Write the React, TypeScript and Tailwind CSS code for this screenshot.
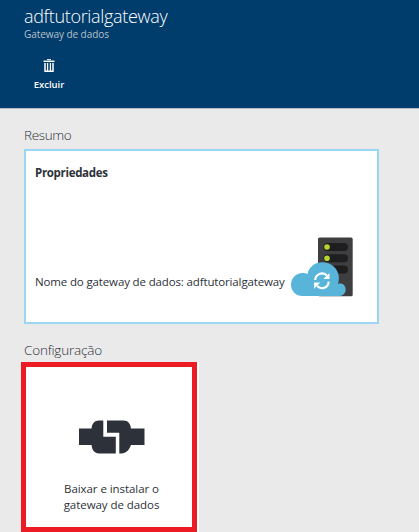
function TrashIcon() {
  return (
    <svg width="12" height="14" viewBox="0 0 12 14" className="block" fill="none" stroke="#fff">
      <path d="M4 .7h4" strokeWidth="1" />
      <path d="M.5 2.3h11" strokeWidth="1.5" />
      <path d="M2 4v8.3h8V4" strokeWidth="1.5" />
      <path d="M4.5 4v8M7.5 4v8" strokeWidth="1.1" />
      <path d="M6 4v8" strokeWidth=".7" opacity=".5" />
    </svg>
  );
}

function ServerCloudIcon() {
  return (
    <svg width="62" height="60" viewBox="0 0 62 60" className="block">
      <rect x="27" y=".5" width="34.7" height="58.8" rx="1.6" fill="#3e3e40" />
      <g fill="#1e1e1f">
        <rect x="32.5" y="6" width="24.5" height="8" rx="4" />
        <rect x="32.5" y="17.2" width="24.5" height="8" rx="4" />
        <rect x="32.5" y="28.4" width="24.5" height="8" rx="4" />
      </g>
      <circle cx="36" cy="10" r="2.8" fill="#b8d432" />
      <circle cx="36" cy="21.2" r="2.8" fill="#b8d432" />
      <path
        d="M11.5 59C5 59 0 54 0 47.700S5 36 11.5 36c2 0 3.500.4 5 1C17.800 30 24 25.300 31.500 25.300c9.500 0 16.400 7.300 16.400 15.700 0 2.200-.4 4.200-1 6 .8-.4 1.600-.5 2.400-.5 3.200 0 5.400 2.700 5.400 6.100S52.200 59 48.500 59z"
        fill="#59b4d9"
      />
      <g fill="none" stroke="#fff" strokeWidth="2.1">
        <path d="M24.200 43a6.700 6.700 0 0 1 11.500-4.500" />
        <path d="M37.700 44.600a6.700 6.700 0 0 1-11.500 4.500" />
      </g>
      <path d="M38.500 35.900v6.200h-6.200zM23.100 51.800v-6.200h6.200z" fill="#fff" />
    </svg>
  );
}

function ConnectorIcon() {
  return (
    <svg width="66" height="34" viewBox="0 0 66 34" className="block" fill="#2d323a">
      <path d="M0 8.500h12.600C12.800 4 15.500.5 20 .5h4.300v16.300h12.500v16.600H20c-4.500 0-7.200-3.500-7.400-8.300H0z" />
      <path d="M28 .5h16.500c4.500 0 7.200 3.500 7.400 8H65.500v16.600H51.900c-1.300 4.800-5 8.300-9.400 8.300h-2.200V12.800H28z" />
    </svg>
  );
}

export default function App() {
  return (
    <main className="h-[532px] w-[419px] overflow-hidden bg-[#eaeaea] font-['Open_Sans','Noto_Sans',sans-serif] text-[#2d3239]">
      <header className="h-[109px] border-b border-[#b5bbc1] bg-[#003c6c] pl-6 text-white">
        <h1 className="pt-1 text-[18px] leading-6 font-light tracking-[-0.32px]">adftutorialgateway</h1>
        <p className="text-[10px] leading-[13px] tracking-[-0.06px] text-[#b8c0c8]">Gateway de dados</p>
        <button className="mt-[18px] flex w-[50px] flex-col items-center">
          <TrashIcon />
          <span className="mt-[5px] text-[9.5px] leading-[14px] font-semibold">Excluir</span>
        </button>
      </header>
      <section className="pl-6">
        <h2 className="mt-4 h-6 text-[13.5px] leading-5 font-light tracking-[-0.35px]">Resumo</h2>
        <div className="flex h-[175px] w-[355px] flex-col border-2 border-[#9bd6f3] bg-white pl-[9px]">
          <h3 className="mt-[14px] text-[11.5px] leading-4 font-bold tracking-[-0.32px]">Propriedades</h3>
          <div className="mt-14 flex items-start">
            <p className="mt-[37px] w-[256px] shrink-0 text-[11.5px] leading-4 tracking-[-0.14px] whitespace-nowrap">
              Nome do gateway de dados: adftutorialgateway
            </p>
            <ServerCloudIcon />
          </div>
        </div>
      </section>
      <section className="pl-[21px]">
        <h2 className="mt-4 h-[22px] pl-[3px] text-[13.5px] leading-5 font-light tracking-[-0.2px]">Configuração</h2>
        <div className="h-[170px] w-[178px] bg-white">
          <button className="flex h-[170px] w-[176px] flex-col items-center border-5 border-[#ed1c24] bg-white pt-[53px] pl-[5px]">
            <ConnectorIcon />
            <span className="mt-[27px] text-[11.5px] leading-4 tracking-[-0.06px]">
              Baixar e instalar o<br />gateway de dados
            </span>
          </button>
        </div>
      </section>
    </main>
  );
}
